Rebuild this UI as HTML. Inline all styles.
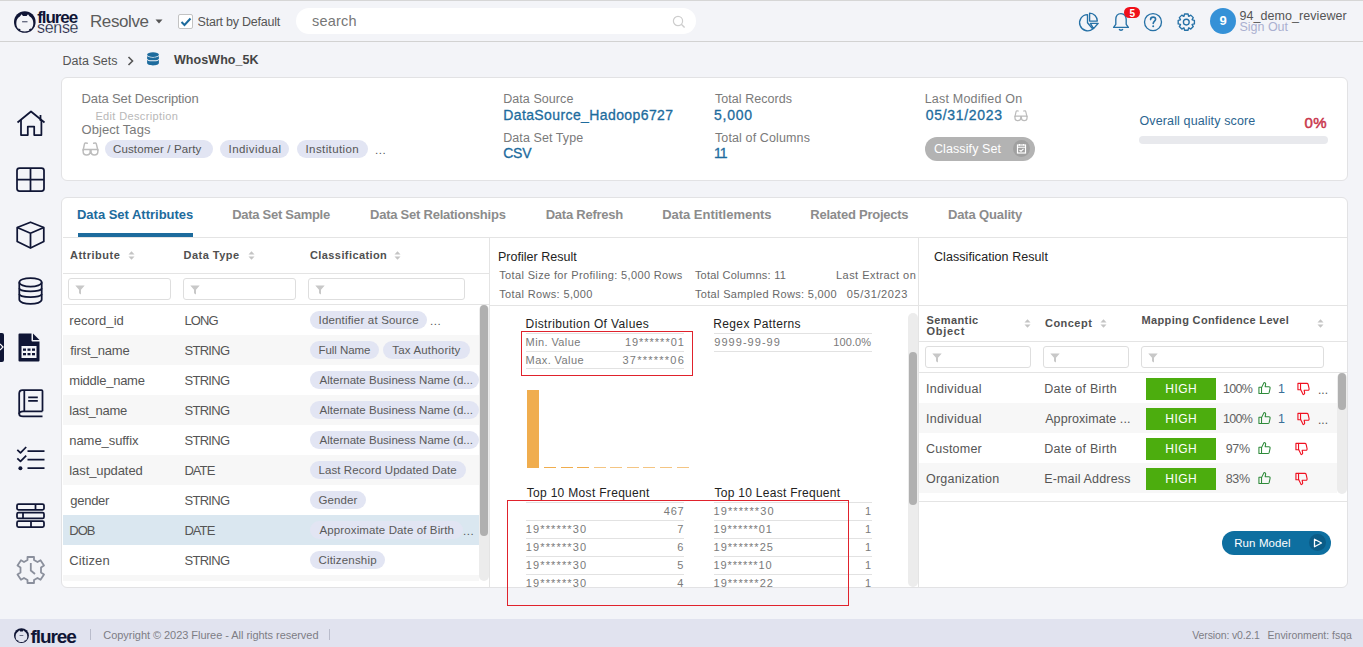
<!DOCTYPE html>
<html><head><meta charset="utf-8">
<style>
*{box-sizing:border-box;margin:0;padding:0}
html,body{width:1363px;height:647px;overflow:hidden;background:#f3f4f8;font-family:"Liberation Sans",sans-serif}
.s{position:absolute}
.t{position:absolute;white-space:pre;line-height:1}
svg{position:absolute;overflow:visible}
</style></head>
<body>
<div class="s" style="left:0px;top:0px;width:1363px;height:1px;background:#d6d6d6"></div>
<div class="s" style="left:0px;top:41px;width:1363px;height:1px;background:#d2d2d2"></div>
<svg style="left:14px;top:11.2px" width="22.0" height="22.0" viewBox="0 0 22 22">
<circle cx="10.8" cy="11" r="10.8" fill="#0f1535"/>
<path d="M2.3 12.2 C2.3 8.8 3.8 6.6 5.9 5.5 L7.6 3.3 L9 5.1 C10 4.9 11.6 4.9 12.6 5.1 L14 3.3 L15.7 5.5 C17.8 6.6 19.3 8.8 19.3 12.2 C19.3 17.6 15.6 20.4 10.8 20.4 C6 20.4 2.3 17.6 2.3 12.2 Z" fill="#f3f4f8"/>
<path d="M4.3 17.3 L6.7 18.6 L5.3 20.3 Z M17.3 17.3 L14.9 18.6 L16.3 20.3 Z" fill="#0f1535"/>
<rect x="8.1" y="10.2" width="5.4" height="1.1" fill="#0f1535" opacity="0.75"/>
</svg>
<svg style="left:155px;top:19px" width="8" height="5"><path d="M0.5 0.5 L7.5 0.5 L4 4.5 Z" fill="#555"/></svg>
<div class="s" style="left:178px;top:14px;width:15px;height:15px;border:1px solid #c3c3c3;border-radius:2px;background:#fff"></div>
<svg style="left:180px;top:17px" width="12" height="10"><path d="M1.5 5 L4.5 8 L10.5 1.5" stroke="#1d6b9d" stroke-width="2" fill="none"/></svg>
<div class="s" style="left:296px;top:8px;width:400px;height:26px;border-radius:13px;background:#fff"></div>
<svg style="left:672px;top:14.5px" width="14" height="14"><circle cx="6" cy="6" r="4.6" stroke="#cdcdcd" stroke-width="1.2" fill="none"/><path d="M9.3 9.3 L12.6 12.6" stroke="#cdcdcd" stroke-width="1.4"/></svg>
<svg style="left:1074px;top:4px" width="130" height="34" viewBox="0 0 130 34">
<path d="M13.5 10.6 A8.1 8.1 0 1 0 18.8 25 L13.5 18.7 Z" stroke="#2671a6" stroke-width="1.35" fill="none" stroke-linejoin="round"/>
<path d="M15.6 9.2 L15.6 17.1 L23.3 17.1 A7.9 7.9 0 0 0 15.6 9.2 Z" stroke="#2671a6" stroke-width="1.35" fill="none" stroke-linejoin="round"/>
<path d="M16.4 19.3 L24.2 19.3 L19.6 24.6 Z" stroke="#2671a6" stroke-width="1.35" fill="none" stroke-linejoin="round"/>
<path d="M47 9.6 C43.5 9.6 41.8 12.3 41.8 15.6 L41.8 20.3 L39.6 23.4 L54.4 23.4 L52.2 20.3 L52.2 15.6 C52.2 12.3 50.5 9.6 47 9.6 Z" stroke="#2671a6" stroke-width="1.35" fill="none" stroke-linejoin="round"/>
<path d="M45.2 25 C45.6 26.6 48.4 26.6 48.8 25" stroke="#2671a6" stroke-width="1.35" fill="none" stroke-linejoin="round"/>
<circle cx="79" cy="18.1" r="8.5" stroke="#2671a6" stroke-width="1.35" fill="none" stroke-linejoin="round"/>
<path d="M76.6 15.6 C76.6 13.9 77.7 13.1 79.1 13.1 C80.6 13.1 81.6 14 81.6 15.3 C81.6 17 79.2 17.3 79.2 19.5" stroke="#2671a6" stroke-width="1.6" fill="none" stroke-linecap="round"/>
<circle cx="79.2" cy="22.3" r="1" fill="#2671a6"/>
<path d="M110.00 12.23 L110.52 9.99 L114.08 9.99 L114.60 12.23 L114.82 12.33 L116.77 11.11 L119.29 13.63 L118.07 15.58 L118.17 15.80 L120.41 16.32 L120.41 19.88 L118.17 20.40 L118.07 20.62 L119.29 22.57 L116.77 25.09 L114.82 23.87 L114.60 23.97 L114.08 26.21 L110.52 26.21 L110.00 23.97 L109.78 23.87 L107.83 25.09 L105.31 22.57 L106.53 20.62 L106.43 20.40 L104.19 19.88 L104.19 16.32 L106.43 15.80 L106.53 15.58 L105.31 13.63 L107.83 11.11 L109.78 12.33 Z" stroke="#2671a6" stroke-width="1.35" fill="none" stroke-linejoin="round"/>
<circle cx="112.3" cy="18.1" r="2.9" stroke="#2671a6" stroke-width="1.35" fill="none" stroke-linejoin="round"/>
</svg>
<div class="s" style="left:1124px;top:7px;width:16px;height:11px;border-radius:6px;background:#f0101a"></div>
<div class="s" style="left:1210px;top:8px;width:26px;height:26px;border-radius:13px;background:#3591d7"></div>
<svg style="left:127px;top:56px" width="8" height="10"><path d="M1.5 1 L5.5 5 L1.5 9" stroke="#555" stroke-width="1.6" fill="none"/></svg>
<svg style="left:147px;top:52px" width="12" height="14" viewBox="0 0 12 14">
<ellipse cx="6" cy="2.6" rx="5.9" ry="2.4" fill="#1d6b9d"/>
<path d="M0.1 3.6 C0.1 6.4 11.9 6.4 11.9 3.6 L11.9 6.4 C11.9 9 0.1 9 0.1 6.4 Z" fill="#1d6b9d"/>
<path d="M0.1 7.4 C0.1 10 11.9 10 11.9 7.4 L11.9 11 C11.9 14.2 0.1 14.2 0.1 11 Z" fill="#1d6b9d"/>
</svg>
<svg style="left:16px;top:110px" width="30" height="27" viewBox="0 0 30 27">
<path d="M1.5 12.5 L15 1.5 L28.5 12.5" stroke="#0f1535" stroke-width="1.75" fill="none" stroke-linejoin="round"/>
<path d="M24.5 5 L24.5 11" stroke="#0f1535" stroke-width="1.75" fill="none" stroke-linejoin="round"/>
<path d="M5 10 L5 25 L11.8 25 L11.8 16.5 L18.2 16.5 L18.2 25 L25.4 25 L25.4 10" stroke="#0f1535" stroke-width="1.75" fill="none" stroke-linejoin="round"/>
</svg>
<svg style="left:16px;top:167px" width="29" height="25" viewBox="0 0 29 25">
<rect x="1" y="1" width="27" height="23" rx="2.5" stroke="#0f1535" stroke-width="1.75" fill="none" stroke-linejoin="round"/>
<path d="M14.5 1 L14.5 24 M1 12.5 L28 12.5" stroke="#0f1535" stroke-width="1.75" fill="none" stroke-linejoin="round"/>
</svg>
<svg style="left:16px;top:221px" width="29" height="28" viewBox="0 0 29 28">
<path d="M14.5 1.2 L27.8 6.5 L27.8 20.5 L14.5 27 L1.2 20.5 L1.2 6.5 Z" stroke="#0f1535" stroke-width="1.75" fill="none" stroke-linejoin="round"/>
<path d="M1.2 6.5 L14.5 12.2 L27.8 6.5 M14.5 12.2 L14.5 27" stroke="#0f1535" stroke-width="1.75" fill="none" stroke-linejoin="round"/>
</svg>
<svg style="left:18px;top:277px" width="25" height="28" viewBox="0 0 25 28">
<ellipse cx="12.5" cy="5.3" rx="11.2" ry="4.3" stroke="#0f1535" stroke-width="1.75" fill="none" stroke-linejoin="round"/>
<path d="M1.3 5.3 L1.3 22.6 C1.3 28.4 23.7 28.4 23.7 22.6 L23.7 5.3" stroke="#0f1535" stroke-width="1.75" fill="none" stroke-linejoin="round"/>
<path d="M1.3 11.2 C1.3 15.5 23.7 15.5 23.7 11.2 M1.3 17 C1.3 21.2 23.7 21.2 23.7 17" stroke="#0f1535" stroke-width="1.75" fill="none" stroke-linejoin="round"/>
</svg>
<div class="s" style="left:0px;top:333px;width:4px;height:29px;background:#0f1535;border-radius:0 2px 2px 0"></div>
<svg style="left:0px;top:342px" width="4" height="10"><path d="M0 2 L3 5 L0 8" stroke="#fff" stroke-width="1.2" fill="none"/></svg>
<svg style="left:18px;top:333px" width="23" height="29" viewBox="0 0 23 29">
<path d="M0.5 1.5 Q0.5 0.5 1.5 0.5 L13.5 0.5 L13.5 7.5 Q13.5 8.5 14.5 8.5 L21.5 8.5 L21.5 27.5 Q21.5 28.5 20.5 28.5 L1.5 28.5 Q0.5 28.5 0.5 27.5 Z" fill="#0f1535"/>
<path d="M15 0.5 L21.5 7 L15 7 Z" fill="#0f1535"/>
<rect x="3.5" y="13" width="15" height="12" fill="#f3f4f8"/>
<rect x="5" y="15.5" width="3" height="2.3" fill="#0f1535"/><rect x="9.5" y="15.5" width="3" height="2.3" fill="#0f1535"/><rect x="14" y="15.5" width="3" height="2.3" fill="#0f1535"/>
<rect x="5" y="20" width="3" height="2.3" fill="#0f1535"/><rect x="9.5" y="20" width="3" height="2.3" fill="#0f1535"/><rect x="14" y="20" width="3" height="2.3" fill="#0f1535"/>
</svg>
<svg style="left:18px;top:389px" width="26" height="29" viewBox="0 0 26 29">
<path d="M24.5 22.3 L5 22.3 C2.8 22.3 1.2 23.5 1.2 24.9 C1.2 26.3 2.8 27.3 5 27.3 L24.5 27.3" stroke="#0f1535" stroke-width="1.75" fill="none" stroke-linejoin="round"/>
<path d="M1.2 25 L1.2 4.5 C1.2 2.5 2.5 1 4.5 1 L23.5 1 Q24.5 1 24.5 2 L24.5 22.3" stroke="#0f1535" stroke-width="1.75" fill="none" stroke-linejoin="round"/>
<path d="M6.3 1 L6.3 22.3" stroke="#0f1535" stroke-width="1.75" fill="none" stroke-linejoin="round"/>
<path d="M10.2 8.3 L19.8 8.3 M10.2 11.8 L19.8 11.8" stroke="#0f1535" stroke-width="1.75" fill="none" stroke-linejoin="round"/>
</svg>
<svg style="left:16px;top:446px" width="30" height="26" viewBox="0 0 30 26">
<path d="M1.3 3.8 L4.5 6.8 L10.2 1 M1.3 12.3 L4.5 15.3 L10.2 9.6" stroke="#0f1535" stroke-width="1.75" fill="none" stroke-linejoin="round"/>
<path d="M11.5 5 L28.5 5 M11.5 13.7 L28.5 13.7 M11.5 22.2 L28.5 22.2" stroke="#0f1535" stroke-width="1.75" fill="none" stroke-linejoin="round"/>
<circle cx="4.4" cy="22.2" r="2" fill="#0f1535"/>
</svg>
<svg style="left:16px;top:503px" width="29" height="25" viewBox="0 0 29 25">
<rect x="1" y="1" width="27" height="5.8" rx="1.5" stroke="#0f1535" stroke-width="1.75" fill="none" stroke-linejoin="round"/>
<rect x="1" y="9.6" width="27" height="5.8" rx="1.5" stroke="#0f1535" stroke-width="1.75" fill="none" stroke-linejoin="round"/>
<rect x="1" y="18.2" width="27" height="5.8" rx="1.5" stroke="#0f1535" stroke-width="1.75" fill="none" stroke-linejoin="round"/>
<path d="M19.5 1 L19.5 6.8 M7 9.6 L7 15.4 M15 18.2 L15 24" stroke="#0f1535" stroke-width="1.75" fill="none" stroke-linejoin="round"/>
</svg>
<svg style="left:16px;top:555px" width="30" height="30" viewBox="0 0 30 30">
<path d="M11.5 2 L18 2 L18 5 L21.5 7 L24.5 5.3 L28 10.5 L25 12.5 L25 17.5 L28 19.5 L24.5 24.7 L21.5 23 L18 25 L18 28 L11.5 28 L11.5 25 L8 23 L5 24.7 L1.5 19.5 L4.5 17.5 L4.5 12.5 L1.5 10.5 L5 5.3 L8 7 L11.5 5 Z" stroke="#8a8f9c" stroke-width="1.8" fill="none" stroke-linejoin="round"/>
<path d="M14.8 8 L14.8 15.5 L19 19" stroke="#8a8f9c" stroke-width="1.8" fill="none"/>
</svg>
<div class="s" style="left:0px;top:619px;width:1363px;height:28px;background:#e1e3ef"></div>
<svg style="left:13.9px;top:628.3px" width="15.18" height="15.18" viewBox="0 0 22 22">
<circle cx="10.8" cy="11" r="10.8" fill="#0f1535"/>
<path d="M2.3 12.2 C2.3 8.8 3.8 6.6 5.9 5.5 L7.6 3.3 L9 5.1 C10 4.9 11.6 4.9 12.6 5.1 L14 3.3 L15.7 5.5 C17.8 6.6 19.3 8.8 19.3 12.2 C19.3 17.6 15.6 20.4 10.8 20.4 C6 20.4 2.3 17.6 2.3 12.2 Z" fill="#e1e3ef"/>
<path d="M4.3 17.3 L6.7 18.6 L5.3 20.3 Z M17.3 17.3 L14.9 18.6 L16.3 20.3 Z" fill="#0f1535"/>
<rect x="8.1" y="10.2" width="5.4" height="1.1" fill="#0f1535" opacity="0.75"/>
</svg>
<div class="s" style="left:90px;top:629px;width:1px;height:11px;background:#b9bccb"></div>
<div class="s" style="left:329px;top:629px;width:1px;height:11px;background:#b9bccb"></div>
<div class="s" style="left:61px;top:77px;width:1287px;height:104px;background:#fff;border:1px solid #e2e2e4;border-radius:6px"></div>
<svg style="left:81.5px;top:142px" width="17" height="14" viewBox="0 0 16.3 13.6"><g stroke="#bcbcbc" stroke-width="1.4" fill="none" stroke-linejoin="round" stroke-linecap="round">
<path d="M1 7.3 L15.3 7.3 M1 7.3 L1 9.5 C1 11.8 2.3 12.6 4.4 12.6 C6.5 12.6 7.8 11.8 7.8 9.5 L7.8 7.3 M8.7 7.3 L8.7 9.5 C8.7 11.8 9.8 12.6 11.9 12.6 C14 12.6 15.3 11.8 15.3 9.5 L15.3 7.3"/>
<path d="M1 8 L2.3 1.8 C2.5 0.9 3.5 0.8 5 1.2 M15.3 8 L13.8 1.8 C13.6 0.9 12.6 0.8 11.2 1.2"/></g></svg>
<div class="s" style="left:105px;top:140px;width:108px;height:18px;background:#e2e5f3;border-radius:9px"></div>
<div class="s" style="left:220px;top:140px;width:69px;height:18px;background:#e2e5f3;border-radius:9px"></div>
<div class="s" style="left:297px;top:140px;width:71px;height:18px;background:#e2e5f3;border-radius:9px"></div>
<svg style="left:1013.5px;top:110px" width="14" height="11.5" viewBox="0 0 16.3 13.6"><g stroke="#bcbcbc" stroke-width="1.4" fill="none" stroke-linejoin="round" stroke-linecap="round">
<path d="M1 7.3 L15.3 7.3 M1 7.3 L1 9.5 C1 11.8 2.3 12.6 4.4 12.6 C6.5 12.6 7.8 11.8 7.8 9.5 L7.8 7.3 M8.7 7.3 L8.7 9.5 C8.7 11.8 9.8 12.6 11.9 12.6 C14 12.6 15.3 11.8 15.3 9.5 L15.3 7.3"/>
<path d="M1 8 L2.3 1.8 C2.5 0.9 3.5 0.8 5 1.2 M15.3 8 L13.8 1.8 C13.6 0.9 12.6 0.8 11.2 1.2"/></g></svg>
<div class="s" style="left:925px;top:137px;width:110px;height:24px;background:#b3b3b3;border-radius:12px"></div>
<div class="s" style="left:1013px;top:140px;width:17px;height:17px;background:#a0a0a0;border-radius:9px"></div>
<svg style="left:1016px;top:142.7px" width="11" height="11" viewBox="0 0 11 11"><rect x="1.5" y="2" width="8" height="8" stroke="#fff" stroke-width="1.2" fill="none"/><path d="M1.5 4.3 L9.5 4.3 M3.5 1 L3.5 2.5 M7.5 1 L7.5 2.5 M3.5 7 L5 8.2 L7.5 5.8" stroke="#fff" stroke-width="1.1" fill="none"/></svg>
<div class="s" style="left:1139px;top:136px;width:189px;height:8px;background:#e8e9ed;border-radius:4px"></div>
<div class="s" style="left:61px;top:197px;width:1287px;height:391px;background:#fff;border:1px solid #e2e2e4;border-radius:6px"></div>
<div class="s" style="left:78px;top:233px;width:115px;height:4px;background:#1d6b9d"></div>
<div class="s" style="left:63px;top:237px;width:1284px;height:1px;background:#e4e4e4"></div>
<div class="s" style="left:489px;top:238px;width:1px;height:350px;background:#e4e4e4"></div>
<div class="s" style="left:918px;top:238px;width:1px;height:350px;background:#e4e4e4"></div>
<svg style="left:128px;top:251px" width="7" height="9" viewBox="0 0 7 9"><path d="M0.5 3.5 L3.5 0.3 L6.5 3.5 Z M0.5 5.5 L3.5 8.7 L6.5 5.5 Z" fill="#c4c4c4"/></svg>
<svg style="left:248px;top:251px" width="7" height="9" viewBox="0 0 7 9"><path d="M0.5 3.5 L3.5 0.3 L6.5 3.5 Z M0.5 5.5 L3.5 8.7 L6.5 5.5 Z" fill="#c4c4c4"/></svg>
<svg style="left:394px;top:251px" width="7" height="9" viewBox="0 0 7 9"><path d="M0.5 3.5 L3.5 0.3 L6.5 3.5 Z M0.5 5.5 L3.5 8.7 L6.5 5.5 Z" fill="#c4c4c4"/></svg>
<div class="s" style="left:63px;top:273px;width:426px;height:1px;background:#e4e4e4"></div>
<div class="s" style="left:68px;top:278px;width:103px;height:22px;border:1px solid #dedede;border-radius:3px;background:#fff"></div>
<svg style="left:75px;top:285px" width="10" height="10" viewBox="0 0 10 10"><path d="M0.3 0.5 L9.7 0.5 L6 4.8 L6 9.5 L4 8.2 L4 4.8 Z" fill="#c8c8c8"/></svg>
<div class="s" style="left:183px;top:278px;width:113px;height:22px;border:1px solid #dedede;border-radius:3px;background:#fff"></div>
<svg style="left:190px;top:285px" width="10" height="10" viewBox="0 0 10 10"><path d="M0.3 0.5 L9.7 0.5 L6 4.8 L6 9.5 L4 8.2 L4 4.8 Z" fill="#c8c8c8"/></svg>
<div class="s" style="left:308px;top:278px;width:157px;height:22px;border:1px solid #dedede;border-radius:3px;background:#fff"></div>
<svg style="left:315px;top:285px" width="10" height="10" viewBox="0 0 10 10"><path d="M0.3 0.5 L9.7 0.5 L6 4.8 L6 9.5 L4 8.2 L4 4.8 Z" fill="#c8c8c8"/></svg>
<div class="s" style="left:63px;top:304px;width:426px;height:1px;background:#e4e4e4"></div>
<div class="s" style="left:63px;top:305px;width:416px;height:30px;background:#fff"></div>
<div class="s" style="left:310px;top:311px;width:117px;height:18px;background:#e2e5f3;border-radius:9px"></div>
<div class="s" style="left:63px;top:335px;width:416px;height:30px;background:#f7f7f7"></div>
<div class="s" style="left:310px;top:341px;width:69px;height:18px;background:#e2e5f3;border-radius:9px"></div>
<div class="s" style="left:383px;top:341px;width:87px;height:18px;background:#e2e5f3;border-radius:9px"></div>
<div class="s" style="left:63px;top:365px;width:416px;height:30px;background:#fff"></div>
<div class="s" style="left:310px;top:371px;width:169px;height:18px;background:#e2e5f3;border-radius:9px"></div>
<div class="s" style="left:63px;top:395px;width:416px;height:30px;background:#f7f7f7"></div>
<div class="s" style="left:310px;top:401px;width:169px;height:18px;background:#e2e5f3;border-radius:9px"></div>
<div class="s" style="left:63px;top:425px;width:416px;height:30px;background:#fff"></div>
<div class="s" style="left:310px;top:431px;width:169px;height:18px;background:#e2e5f3;border-radius:9px"></div>
<div class="s" style="left:63px;top:455px;width:416px;height:30px;background:#f7f7f7"></div>
<div class="s" style="left:310px;top:461px;width:156px;height:18px;background:#e2e5f3;border-radius:9px"></div>
<div class="s" style="left:63px;top:485px;width:416px;height:30px;background:#fff"></div>
<div class="s" style="left:310px;top:491px;width:56px;height:18px;background:#e2e5f3;border-radius:9px"></div>
<div class="s" style="left:63px;top:515px;width:416px;height:30px;background:#dae7f0"></div>
<div class="s" style="left:310px;top:521px;width:153px;height:18px;background:#e2e5f3;border-radius:9px"></div>
<div class="s" style="left:63px;top:545px;width:416px;height:30px;background:#fff"></div>
<div class="s" style="left:310px;top:551px;width:74.5px;height:18px;background:#e2e5f3;border-radius:9px"></div>
<div class="s" style="left:63px;top:575px;width:416px;height:6px;background:#f7f7f7"></div>
<div class="s" style="left:479px;top:305px;width:10px;height:276px;background:#ececec;border-radius:5px"></div>
<div class="s" style="left:480px;top:305px;width:8px;height:231px;background:#b0b0b0;border-radius:4px"></div>
<div class="s" style="left:490px;top:305px;width:428px;height:1px;background:#e4e4e4"></div>
<div class="s" style="left:526px;top:333px;width:158px;height:1px;background:#e2e2e2"></div>
<div class="s" style="left:526px;top:351px;width:158px;height:1px;background:#e2e2e2"></div>
<div class="s" style="left:526px;top:368px;width:158px;height:1px;background:#e2e2e2"></div>
<div class="s" style="left:714px;top:333px;width:158px;height:1px;background:#e2e2e2"></div>
<div class="s" style="left:714px;top:351px;width:158px;height:1px;background:#e2e2e2"></div>
<div class="s" style="left:521px;top:331px;width:172px;height:45px;border:1.3px solid #e0222c"></div>
<div class="s" style="left:527px;top:390px;width:12px;height:78px;background:#f0ad4e"></div>
<div class="s" style="left:544px;top:466.5px;width:12px;height:1.6px;background:#f0ad4e;opacity:1.0"></div>
<div class="s" style="left:560.5px;top:466.5px;width:12px;height:1.6px;background:#f0ad4e;opacity:1.0"></div>
<div class="s" style="left:577px;top:466.5px;width:12px;height:1.6px;background:#f0ad4e;opacity:1.0"></div>
<div class="s" style="left:593.6px;top:466.5px;width:12px;height:1.6px;background:#f0ad4e;opacity:0.7"></div>
<div class="s" style="left:610px;top:466.5px;width:12px;height:1.6px;background:#f0ad4e;opacity:0.7"></div>
<div class="s" style="left:626.8px;top:466.5px;width:12px;height:1.6px;background:#f0ad4e;opacity:0.7"></div>
<div class="s" style="left:643.2px;top:466.5px;width:12px;height:1.6px;background:#f0ad4e;opacity:0.7"></div>
<div class="s" style="left:660px;top:466.5px;width:12px;height:1.6px;background:#f0ad4e;opacity:0.7"></div>
<div class="s" style="left:676.6px;top:466.5px;width:12px;height:1.6px;background:#f0ad4e;opacity:0.7"></div>
<div class="s" style="left:526px;top:502px;width:158px;height:1px;background:#e2e2e2"></div>
<div class="s" style="left:714px;top:502px;width:158px;height:1px;background:#e2e2e2"></div>
<div class="s" style="left:526px;top:520px;width:158px;height:1px;background:#e2e2e2"></div>
<div class="s" style="left:714px;top:520px;width:158px;height:1px;background:#e2e2e2"></div>
<div class="s" style="left:526px;top:538px;width:158px;height:1px;background:#e2e2e2"></div>
<div class="s" style="left:714px;top:538px;width:158px;height:1px;background:#e2e2e2"></div>
<div class="s" style="left:526px;top:556px;width:158px;height:1px;background:#e2e2e2"></div>
<div class="s" style="left:714px;top:556px;width:158px;height:1px;background:#e2e2e2"></div>
<div class="s" style="left:526px;top:574px;width:158px;height:1px;background:#e2e2e2"></div>
<div class="s" style="left:714px;top:574px;width:158px;height:1px;background:#e2e2e2"></div>
<div class="s" style="left:908px;top:313px;width:10px;height:274px;background:#ececec;border-radius:5px"></div>
<div class="s" style="left:909px;top:352px;width:8px;height:153px;background:#b0b0b0;border-radius:4px"></div>
<div class="s" style="left:919px;top:305px;width:428px;height:1px;background:#e4e4e4"></div>
<svg style="left:1024px;top:319px" width="7" height="9" viewBox="0 0 7 9"><path d="M0.5 3.5 L3.5 0.3 L6.5 3.5 Z M0.5 5.5 L3.5 8.7 L6.5 5.5 Z" fill="#c4c4c4"/></svg>
<svg style="left:1100px;top:319px" width="7" height="9" viewBox="0 0 7 9"><path d="M0.5 3.5 L3.5 0.3 L6.5 3.5 Z M0.5 5.5 L3.5 8.7 L6.5 5.5 Z" fill="#c4c4c4"/></svg>
<svg style="left:1317px;top:319px" width="7" height="9" viewBox="0 0 7 9"><path d="M0.5 3.5 L3.5 0.3 L6.5 3.5 Z M0.5 5.5 L3.5 8.7 L6.5 5.5 Z" fill="#c4c4c4"/></svg>
<div class="s" style="left:919px;top:341px;width:428px;height:1px;background:#e4e4e4"></div>
<div class="s" style="left:925px;top:346px;width:106px;height:22px;border:1px solid #dedede;border-radius:3px;background:#fff"></div>
<svg style="left:932px;top:353px" width="10" height="10" viewBox="0 0 10 10"><path d="M0.3 0.5 L9.7 0.5 L6 4.8 L6 9.5 L4 8.2 L4 4.8 Z" fill="#c8c8c8"/></svg>
<div class="s" style="left:1043px;top:346px;width:86px;height:22px;border:1px solid #dedede;border-radius:3px;background:#fff"></div>
<svg style="left:1050px;top:353px" width="10" height="10" viewBox="0 0 10 10"><path d="M0.3 0.5 L9.7 0.5 L6 4.8 L6 9.5 L4 8.2 L4 4.8 Z" fill="#c8c8c8"/></svg>
<div class="s" style="left:1141px;top:346px;width:183px;height:22px;border:1px solid #dedede;border-radius:3px;background:#fff"></div>
<svg style="left:1148px;top:353px" width="10" height="10" viewBox="0 0 10 10"><path d="M0.3 0.5 L9.7 0.5 L6 4.8 L6 9.5 L4 8.2 L4 4.8 Z" fill="#c8c8c8"/></svg>
<div class="s" style="left:919px;top:372px;width:428px;height:1px;background:#e4e4e4"></div>
<div class="s" style="left:919px;top:373px;width:418px;height:30px;background:#fff"></div>
<div class="s" style="left:1146px;top:378px;width:70px;height:21.5px;background:#4cad0e"></div>
<svg style="left:1258.3px;top:381px" width="13" height="14" viewBox="0 0 14 14"><g stroke="#2e8b3a" stroke-width="1.15" fill="none" stroke-linejoin="round"><path d="M1 6.2 L3.8 6.2 L3.8 13 L1 13 Z"/><path d="M3.8 6.6 L6.6 1 C7.8 1 8.4 1.9 8.2 3 L7.7 5.6 L11.7 5.6 C12.7 5.6 13.2 6.4 13 7.3 L12 12 C11.8 12.7 11.3 13 10.6 13 L3.8 13"/></g></svg>
<svg style="left:1296.5px;top:382px" width="13" height="14" viewBox="0 0 14 14"><g stroke="#f01020" stroke-width="1.2" fill="none" stroke-linejoin="round"><path d="M1 1 L3.8 1 L3.8 7.8 L1 7.8 Z"/><path d="M3.8 7.4 L6.6 13 C7.8 13 8.4 12.1 8.2 11 L7.7 8.4 L11.7 8.4 C12.7 8.4 13.2 7.6 13 6.7 L12 2 C11.8 1.3 11.3 1 10.6 1 L3.8 1"/></g></svg>
<div class="s" style="left:919px;top:403px;width:418px;height:30px;background:#f7f7f7"></div>
<div class="s" style="left:1146px;top:408px;width:70px;height:21.5px;background:#4cad0e"></div>
<svg style="left:1258.3px;top:411px" width="13" height="14" viewBox="0 0 14 14"><g stroke="#2e8b3a" stroke-width="1.15" fill="none" stroke-linejoin="round"><path d="M1 6.2 L3.8 6.2 L3.8 13 L1 13 Z"/><path d="M3.8 6.6 L6.6 1 C7.8 1 8.4 1.9 8.2 3 L7.7 5.6 L11.7 5.6 C12.7 5.6 13.2 6.4 13 7.3 L12 12 C11.8 12.7 11.3 13 10.6 13 L3.8 13"/></g></svg>
<svg style="left:1296.5px;top:412px" width="13" height="14" viewBox="0 0 14 14"><g stroke="#f01020" stroke-width="1.2" fill="none" stroke-linejoin="round"><path d="M1 1 L3.8 1 L3.8 7.8 L1 7.8 Z"/><path d="M3.8 7.4 L6.6 13 C7.8 13 8.4 12.1 8.2 11 L7.7 8.4 L11.7 8.4 C12.7 8.4 13.2 7.6 13 6.7 L12 2 C11.8 1.3 11.3 1 10.6 1 L3.8 1"/></g></svg>
<div class="s" style="left:919px;top:433px;width:418px;height:30px;background:#fff"></div>
<div class="s" style="left:1146px;top:438px;width:70px;height:21.5px;background:#4cad0e"></div>
<svg style="left:1258.3px;top:441px" width="13" height="14" viewBox="0 0 14 14"><g stroke="#2e8b3a" stroke-width="1.15" fill="none" stroke-linejoin="round"><path d="M1 6.2 L3.8 6.2 L3.8 13 L1 13 Z"/><path d="M3.8 6.6 L6.6 1 C7.8 1 8.4 1.9 8.2 3 L7.7 5.6 L11.7 5.6 C12.7 5.6 13.2 6.4 13 7.3 L12 12 C11.8 12.7 11.3 13 10.6 13 L3.8 13"/></g></svg>
<svg style="left:1294.5px;top:442px" width="13" height="14" viewBox="0 0 14 14"><g stroke="#f01020" stroke-width="1.2" fill="none" stroke-linejoin="round"><path d="M1 1 L3.8 1 L3.8 7.8 L1 7.8 Z"/><path d="M3.8 7.4 L6.6 13 C7.8 13 8.4 12.1 8.2 11 L7.7 8.4 L11.7 8.4 C12.7 8.4 13.2 7.6 13 6.7 L12 2 C11.8 1.3 11.3 1 10.6 1 L3.8 1"/></g></svg>
<div class="s" style="left:919px;top:463px;width:418px;height:30px;background:#f7f7f7"></div>
<div class="s" style="left:1146px;top:468px;width:70px;height:21.5px;background:#4cad0e"></div>
<svg style="left:1258.3px;top:471px" width="13" height="14" viewBox="0 0 14 14"><g stroke="#2e8b3a" stroke-width="1.15" fill="none" stroke-linejoin="round"><path d="M1 6.2 L3.8 6.2 L3.8 13 L1 13 Z"/><path d="M3.8 6.6 L6.6 1 C7.8 1 8.4 1.9 8.2 3 L7.7 5.6 L11.7 5.6 C12.7 5.6 13.2 6.4 13 7.3 L12 12 C11.8 12.7 11.3 13 10.6 13 L3.8 13"/></g></svg>
<svg style="left:1294.5px;top:472px" width="13" height="14" viewBox="0 0 14 14"><g stroke="#f01020" stroke-width="1.2" fill="none" stroke-linejoin="round"><path d="M1 1 L3.8 1 L3.8 7.8 L1 7.8 Z"/><path d="M3.8 7.4 L6.6 13 C7.8 13 8.4 12.1 8.2 11 L7.7 8.4 L11.7 8.4 C12.7 8.4 13.2 7.6 13 6.7 L12 2 C11.8 1.3 11.3 1 10.6 1 L3.8 1"/></g></svg>
<div class="s" style="left:1337px;top:373px;width:10px;height:121px;background:#ececec;border-radius:5px"></div>
<div class="s" style="left:1338px;top:373px;width:8px;height:37px;background:#b0b0b0;border-radius:4px"></div>
<div class="s" style="left:919px;top:501px;width:428px;height:1px;background:#e4e4e4"></div>
<div class="s" style="left:1222px;top:531px;width:109px;height:24px;background:#0e6fa0;border-radius:12px"></div>
<div class="s" style="left:1309px;top:534px;width:17px;height:17px;background:#0b5c87;border-radius:9px"></div>
<svg style="left:1313px;top:538px" width="10" height="10" viewBox="0 0 10 10"><path d="M1.5 1.2 L8.5 5 L1.5 8.8 Z" stroke="#fff" stroke-width="1.3" fill="none" stroke-linejoin="round"/></svg>
<div class="t" style="left:37.30px;top:9px;font-size:17px;color:#0f1535;font-weight:bold;letter-spacing:-1.100px;">fluree</div>
<div class="t" style="left:37.00px;top:20px;font-size:16px;color:#0f1535;font-weight:normal;letter-spacing:-0.300px;-webkit-text-stroke:0.25px #f3f4f8">sense</div>
<div class="t" style="left:90.00px;top:13px;font-size:17px;color:#5c5c5c;font-weight:normal;letter-spacing:-0.417px;">Resolve</div>
<div class="t" style="left:197.60px;top:16px;font-size:12.5px;color:#555;font-weight:normal;letter-spacing:-0.240px;">Start by Default</div>
<div class="t" style="left:312.00px;top:14px;font-size:14.5px;color:#777;font-weight:normal;letter-spacing:0.200px;">search</div>
<div class="t" style="left:1129.50px;top:9px;font-size:10px;color:#fff;font-weight:bold;letter-spacing:0.000px;">5</div>
<div class="t" style="left:1219.50px;top:14px;font-size:13px;color:#fff;font-weight:bold;letter-spacing:0.000px;">9</div>
<div class="t" style="left:1239.40px;top:10px;font-size:12.5px;color:#555;font-weight:normal;letter-spacing:0.067px;">94_demo_reviewer</div>
<div class="t" style="left:1239.40px;top:21px;font-size:12.5px;color:#aab0d0;font-weight:normal;letter-spacing:0.000px;">Sign Out</div>
<div class="t" style="left:62.50px;top:55px;font-size:12.5px;color:#555;font-weight:normal;letter-spacing:0.000px;">Data Sets</div>
<div class="t" style="left:174.00px;top:54px;font-size:12.5px;color:#444;font-weight:bold;letter-spacing:0.067px;">WhosWho_5K</div>
<div class="t" style="left:30.50px;top:627px;font-size:19px;color:#0f1535;font-weight:bold;letter-spacing:-1.100px;">fluree</div>
<div class="t" style="left:103.30px;top:630px;font-size:11px;color:#7d7d85;font-weight:normal;letter-spacing:-0.045px;">Copyright © 2023 Fluree - All rights reserved</div>
<div class="t" style="left:1192.30px;top:630px;font-size:10.5px;color:#7d7d85;font-weight:normal;letter-spacing:-0.129px;">Version: v0.2.1</div>
<div class="t" style="left:1267.60px;top:630px;font-size:10.5px;color:#7d7d85;font-weight:normal;letter-spacing:-0.025px;">Environment: fsqa</div>
<div class="t" style="left:81.50px;top:92px;font-size:13px;color:#7a7a7a;font-weight:normal;letter-spacing:-0.105px;">Data Set Description</div>
<div class="t" style="left:95.40px;top:111px;font-size:11px;color:#b8b8b8;font-weight:normal;letter-spacing:0.360px;">Edit Description</div>
<div class="t" style="left:81.50px;top:123px;font-size:13px;color:#7a7a7a;font-weight:normal;letter-spacing:0.050px;">Object Tags</div>
<div class="t" style="left:113.00px;top:144px;font-size:11.5px;color:#555;font-weight:normal;letter-spacing:0.133px;">Customer / Party</div>
<div class="t" style="left:228.50px;top:144px;font-size:11.5px;color:#555;font-weight:normal;letter-spacing:0.444px;">Individual</div>
<div class="t" style="left:305.50px;top:144px;font-size:11.5px;color:#555;font-weight:normal;letter-spacing:0.400px;">Institution</div>
<div class="t" style="left:375.00px;top:145px;font-size:11.5px;color:#555;font-weight:normal;letter-spacing:0.500px;">...</div>
<div class="t" style="left:503.20px;top:93px;font-size:12.5px;color:#7a7a7a;font-weight:normal;letter-spacing:0.070px;">Data Source</div>
<div class="t" style="left:503.20px;top:108px;font-size:14px;color:#1d6b9d;font-weight:normal;letter-spacing:0.400px;-webkit-text-stroke:0.3px #1d6b9d">DataSource_Hadoop6727</div>
<div class="t" style="left:503.20px;top:132px;font-size:12.5px;color:#7a7a7a;font-weight:normal;letter-spacing:0.083px;">Data Set Type</div>
<div class="t" style="left:503.20px;top:146px;font-size:14px;color:#1d6b9d;font-weight:normal;letter-spacing:-0.200px;-webkit-text-stroke:0.3px #1d6b9d">CSV</div>
<div class="t" style="left:715.00px;top:93px;font-size:12.5px;color:#7a7a7a;font-weight:normal;letter-spacing:0.050px;">Total Records</div>
<div class="t" style="left:714.00px;top:108px;font-size:14px;color:#1d6b9d;font-weight:normal;letter-spacing:0.750px;-webkit-text-stroke:0.3px #1d6b9d">5,000</div>
<div class="t" style="left:715.00px;top:132px;font-size:12.5px;color:#7a7a7a;font-weight:normal;letter-spacing:0.120px;">Total of Columns</div>
<div class="t" style="left:714.00px;top:146px;font-size:14px;color:#1d6b9d;font-weight:normal;letter-spacing:-1.000px;-webkit-text-stroke:0.3px #1d6b9d">11</div>
<div class="t" style="left:924.70px;top:93px;font-size:12.5px;color:#7a7a7a;font-weight:normal;letter-spacing:0.200px;">Last Modified On</div>
<div class="t" style="left:925.70px;top:108px;font-size:14px;color:#1d6b9d;font-weight:normal;letter-spacing:0.700px;-webkit-text-stroke:0.3px #1d6b9d">05/31/2023</div>
<div class="t" style="left:934.00px;top:143px;font-size:12.5px;color:#fff;font-weight:normal;letter-spacing:0.091px;">Classify Set</div>
<div class="t" style="left:1139.50px;top:115px;font-size:12.5px;color:#2b6590;font-weight:normal;letter-spacing:0.125px;">Overall quality score</div>
<div class="t" style="left:1304.60px;top:115px;font-size:15px;color:#c9374d;font-weight:normal;letter-spacing:0.400px;-webkit-text-stroke:0.5px #c9374d">0%</div>
<div class="t" style="left:77.00px;top:208px;font-size:13px;color:#1d6b9d;font-weight:bold;letter-spacing:-0.017px;">Data Set Attributes</div>
<div class="t" style="left:232.20px;top:208px;font-size:13px;color:#8c8c8c;font-weight:bold;letter-spacing:-0.279px;">Data Set Sample</div>
<div class="t" style="left:370.00px;top:208px;font-size:13px;color:#8c8c8c;font-weight:bold;letter-spacing:-0.238px;">Data Set Relationships</div>
<div class="t" style="left:545.70px;top:208px;font-size:13px;color:#8c8c8c;font-weight:bold;letter-spacing:-0.245px;">Data Refresh</div>
<div class="t" style="left:662.20px;top:208px;font-size:13px;color:#8c8c8c;font-weight:bold;letter-spacing:-0.025px;">Data Entitlements</div>
<div class="t" style="left:810.30px;top:208px;font-size:13px;color:#8c8c8c;font-weight:bold;letter-spacing:-0.240px;">Related Projects</div>
<div class="t" style="left:948.00px;top:208px;font-size:13px;color:#8c8c8c;font-weight:bold;letter-spacing:-0.145px;">Data Quality</div>
<div class="t" style="left:70.00px;top:250px;font-size:11px;color:#505050;font-weight:bold;letter-spacing:0.500px;">Attribute</div>
<div class="t" style="left:183.60px;top:250px;font-size:11px;color:#505050;font-weight:bold;letter-spacing:0.463px;">Data Type</div>
<div class="t" style="left:310.00px;top:250px;font-size:11px;color:#505050;font-weight:bold;letter-spacing:0.408px;">Classification</div>
<div class="t" style="left:69.30px;top:314px;font-size:13px;color:#555;font-weight:normal;letter-spacing:0.037px;">record_id</div>
<div class="t" style="left:184.40px;top:314px;font-size:13px;color:#555;font-weight:normal;letter-spacing:-0.900px;">LONG</div>
<div class="t" style="left:318.50px;top:315px;font-size:11.5px;color:#5a5a5a;font-weight:normal;letter-spacing:0.184px;">Identifier at Source</div>
<div class="t" style="left:430.00px;top:316px;font-size:11.5px;color:#555;font-weight:normal;letter-spacing:0.500px;">...</div>
<div class="t" style="left:70.30px;top:344px;font-size:13px;color:#555;font-weight:normal;letter-spacing:-0.133px;">first_name</div>
<div class="t" style="left:184.40px;top:344px;font-size:13px;color:#555;font-weight:normal;letter-spacing:-0.680px;">STRING</div>
<div class="t" style="left:318.50px;top:345px;font-size:11.5px;color:#5a5a5a;font-weight:normal;letter-spacing:-0.050px;">Full Name</div>
<div class="t" style="left:392.20px;top:345px;font-size:11.5px;color:#5a5a5a;font-weight:normal;letter-spacing:0.192px;">Tax Authority</div>
<div class="t" style="left:69.30px;top:374px;font-size:13px;color:#555;font-weight:normal;letter-spacing:-0.240px;">middle_name</div>
<div class="t" style="left:184.40px;top:374px;font-size:13px;color:#555;font-weight:normal;letter-spacing:-0.680px;">STRING</div>
<div class="t" style="left:319.50px;top:375px;font-size:11.5px;color:#5a5a5a;font-weight:normal;letter-spacing:0.025px;">Alternate Business Name (d...</div>
<div class="t" style="left:69.30px;top:404px;font-size:13px;color:#555;font-weight:normal;letter-spacing:-0.250px;">last_name</div>
<div class="t" style="left:184.40px;top:404px;font-size:13px;color:#555;font-weight:normal;letter-spacing:-0.680px;">STRING</div>
<div class="t" style="left:319.50px;top:405px;font-size:11.5px;color:#5a5a5a;font-weight:normal;letter-spacing:0.025px;">Alternate Business Name (d...</div>
<div class="t" style="left:69.30px;top:434px;font-size:13px;color:#555;font-weight:normal;letter-spacing:-0.070px;">name_suffix</div>
<div class="t" style="left:184.40px;top:434px;font-size:13px;color:#555;font-weight:normal;letter-spacing:-0.680px;">STRING</div>
<div class="t" style="left:319.50px;top:435px;font-size:11.5px;color:#5a5a5a;font-weight:normal;letter-spacing:0.025px;">Alternate Business Name (d...</div>
<div class="t" style="left:69.30px;top:464px;font-size:13px;color:#555;font-weight:normal;letter-spacing:-0.091px;">last_updated</div>
<div class="t" style="left:184.40px;top:464px;font-size:13px;color:#555;font-weight:normal;letter-spacing:-0.933px;">DATE</div>
<div class="t" style="left:318.50px;top:465px;font-size:11.5px;color:#5a5a5a;font-weight:normal;letter-spacing:0.087px;">Last Record Updated Date</div>
<div class="t" style="left:70.30px;top:494px;font-size:13px;color:#555;font-weight:normal;letter-spacing:-0.280px;">gender</div>
<div class="t" style="left:184.40px;top:494px;font-size:13px;color:#555;font-weight:normal;letter-spacing:-0.680px;">STRING</div>
<div class="t" style="left:318.50px;top:495px;font-size:11.5px;color:#5a5a5a;font-weight:normal;letter-spacing:0.080px;">Gender</div>
<div class="t" style="left:69.30px;top:524px;font-size:13px;color:#555;font-weight:normal;letter-spacing:-1.000px;">DOB</div>
<div class="t" style="left:184.40px;top:524px;font-size:13px;color:#555;font-weight:normal;letter-spacing:-0.933px;">DATE</div>
<div class="t" style="left:319.50px;top:525px;font-size:11.5px;color:#5a5a5a;font-weight:normal;letter-spacing:0.117px;">Approximate Date of Birth</div>
<div class="t" style="left:463.00px;top:526px;font-size:11.5px;color:#555;font-weight:normal;letter-spacing:0.500px;">...</div>
<div class="t" style="left:69.30px;top:554px;font-size:13px;color:#555;font-weight:normal;letter-spacing:0.100px;">Citizen</div>
<div class="t" style="left:184.40px;top:554px;font-size:13px;color:#555;font-weight:normal;letter-spacing:-0.680px;">STRING</div>
<div class="t" style="left:318.50px;top:555px;font-size:11.5px;color:#5a5a5a;font-weight:normal;letter-spacing:0.180px;">Citizenship</div>
<div class="t" style="left:497.90px;top:251px;font-size:12.5px;color:#222;font-weight:normal;letter-spacing:0.021px;">Profiler Result</div>
<div class="t" style="left:499.20px;top:270px;font-size:11px;color:#686868;font-weight:normal;letter-spacing:0.360px;">Total Size for Profiling: 5,000 Rows</div>
<div class="t" style="left:499.20px;top:289px;font-size:11px;color:#686868;font-weight:normal;letter-spacing:0.362px;">Total Rows: 5,000</div>
<div class="t" style="left:694.90px;top:270px;font-size:11px;color:#686868;font-weight:normal;letter-spacing:0.231px;">Total Columns: 11</div>
<div class="t" style="left:836.00px;top:270px;font-size:11px;color:#686868;font-weight:normal;letter-spacing:0.457px;">Last Extract on</div>
<div class="t" style="left:694.90px;top:289px;font-size:11px;color:#686868;font-weight:normal;letter-spacing:0.325px;">Total Sampled Rows: 5,000</div>
<div class="t" style="left:846.70px;top:289px;font-size:11px;color:#686868;font-weight:normal;letter-spacing:0.633px;">05/31/2023</div>
<div class="t" style="left:525.60px;top:318px;font-size:12px;color:#222;font-weight:normal;letter-spacing:0.381px;">Distribution Of Values</div>
<div class="t" style="left:713.30px;top:318px;font-size:12px;color:#222;font-weight:normal;letter-spacing:0.354px;">Regex Patterns</div>
<div class="t" style="left:525.60px;top:337px;font-size:11px;color:#7a7a7a;font-weight:normal;letter-spacing:0.400px;">Min. Value</div>
<div class="t" style="left:624.90px;top:337px;font-size:11px;color:#7a7a7a;font-weight:normal;letter-spacing:0.978px;">19******01</div>
<div class="t" style="left:525.60px;top:355px;font-size:11px;color:#7a7a7a;font-weight:normal;letter-spacing:0.422px;">Max. Value</div>
<div class="t" style="left:622.50px;top:355px;font-size:11px;color:#7a7a7a;font-weight:normal;letter-spacing:1.244px;">37******06</div>
<div class="t" style="left:714.30px;top:337px;font-size:11px;color:#7a7a7a;font-weight:normal;letter-spacing:1.033px;">9999-99-99</div>
<div class="t" style="left:833.20px;top:337px;font-size:11px;color:#7a7a7a;font-weight:normal;letter-spacing:0.120px;">100.0%</div>
<div class="t" style="left:526.70px;top:487px;font-size:12px;color:#222;font-weight:normal;letter-spacing:0.316px;">Top 10 Most Frequent</div>
<div class="t" style="left:714.50px;top:487px;font-size:12px;color:#222;font-weight:normal;letter-spacing:0.275px;">Top 10 Least Frequent</div>
<div class="t" style="left:663.80px;top:506px;font-size:11px;color:#7a7a7a;font-weight:normal;letter-spacing:0.750px;">467</div>
<div class="t" style="left:713.50px;top:506px;font-size:11px;color:#7a7a7a;font-weight:normal;letter-spacing:1.100px;">19******30</div>
<div class="t" style="left:865.00px;top:506px;font-size:11px;color:#7a7a7a;font-weight:normal;letter-spacing:0.000px;">1</div>
<div class="t" style="left:525.70px;top:524px;font-size:11px;color:#7a7a7a;font-weight:normal;letter-spacing:1.144px;">19******30</div>
<div class="t" style="left:677.30px;top:524px;font-size:11px;color:#7a7a7a;font-weight:normal;letter-spacing:0.000px;">7</div>
<div class="t" style="left:713.50px;top:524px;font-size:11px;color:#7a7a7a;font-weight:normal;letter-spacing:0.922px;">19******01</div>
<div class="t" style="left:865.00px;top:524px;font-size:11px;color:#7a7a7a;font-weight:normal;letter-spacing:0.000px;">1</div>
<div class="t" style="left:525.70px;top:542px;font-size:11px;color:#7a7a7a;font-weight:normal;letter-spacing:1.144px;">19******30</div>
<div class="t" style="left:677.30px;top:542px;font-size:11px;color:#7a7a7a;font-weight:normal;letter-spacing:0.000px;">6</div>
<div class="t" style="left:713.50px;top:542px;font-size:11px;color:#7a7a7a;font-weight:normal;letter-spacing:1.033px;">19******25</div>
<div class="t" style="left:865.00px;top:542px;font-size:11px;color:#7a7a7a;font-weight:normal;letter-spacing:0.000px;">1</div>
<div class="t" style="left:525.70px;top:560px;font-size:11px;color:#7a7a7a;font-weight:normal;letter-spacing:1.144px;">19******30</div>
<div class="t" style="left:677.30px;top:560px;font-size:11px;color:#7a7a7a;font-weight:normal;letter-spacing:0.000px;">5</div>
<div class="t" style="left:713.50px;top:560px;font-size:11px;color:#7a7a7a;font-weight:normal;letter-spacing:0.878px;">19******10</div>
<div class="t" style="left:865.00px;top:560px;font-size:11px;color:#7a7a7a;font-weight:normal;letter-spacing:0.000px;">1</div>
<div class="t" style="left:525.70px;top:578px;font-size:11px;color:#7a7a7a;font-weight:normal;letter-spacing:1.144px;">19******30</div>
<div class="t" style="left:677.30px;top:578px;font-size:11px;color:#7a7a7a;font-weight:normal;letter-spacing:0.000px;">4</div>
<div class="t" style="left:713.50px;top:578px;font-size:11px;color:#7a7a7a;font-weight:normal;letter-spacing:1.033px;">19******22</div>
<div class="t" style="left:865.00px;top:578px;font-size:11px;color:#7a7a7a;font-weight:normal;letter-spacing:0.000px;">1</div>
<div class="t" style="left:934.00px;top:251px;font-size:12.5px;color:#222;font-weight:normal;letter-spacing:0.070px;">Classification Result</div>
<div class="t" style="left:926.60px;top:315px;font-size:11px;color:#505050;font-weight:bold;letter-spacing:0.386px;">Semantic</div>
<div class="t" style="left:926.60px;top:326px;font-size:11px;color:#505050;font-weight:bold;letter-spacing:0.700px;">Object</div>
<div class="t" style="left:1045.00px;top:318px;font-size:11px;color:#505050;font-weight:bold;letter-spacing:0.467px;">Concept</div>
<div class="t" style="left:1141.60px;top:315px;font-size:11px;color:#505050;font-weight:bold;letter-spacing:0.343px;">Mapping Confidence Level</div>
<div class="t" style="left:926.00px;top:383px;font-size:12.5px;color:#555;font-weight:normal;letter-spacing:0.300px;">Individual</div>
<div class="t" style="left:1044.20px;top:383px;font-size:12.5px;color:#555;font-weight:normal;letter-spacing:0.258px;">Date of Birth</div>
<div class="t" style="left:1165.20px;top:383px;font-size:12px;color:#fff;font-weight:normal;letter-spacing:0.533px;">HIGH</div>
<div class="t" style="left:1223.00px;top:383px;font-size:12.5px;color:#626262;font-weight:normal;letter-spacing:-0.667px;">100%</div>
<div class="t" style="left:1278.00px;top:383px;font-size:12.5px;color:#3a6f98;font-weight:normal;letter-spacing:0.000px;">1</div>
<div class="t" style="left:1318.00px;top:384px;font-size:12px;color:#555;font-weight:normal;letter-spacing:0.000px;">...</div>
<div class="t" style="left:926.00px;top:413px;font-size:12.5px;color:#555;font-weight:normal;letter-spacing:0.300px;">Individual</div>
<div class="t" style="left:1045.20px;top:413px;font-size:12.5px;color:#555;font-weight:normal;letter-spacing:0.086px;">Approximate ...</div>
<div class="t" style="left:1165.20px;top:413px;font-size:12px;color:#fff;font-weight:normal;letter-spacing:0.533px;">HIGH</div>
<div class="t" style="left:1223.00px;top:413px;font-size:12.5px;color:#626262;font-weight:normal;letter-spacing:-0.667px;">100%</div>
<div class="t" style="left:1278.00px;top:413px;font-size:12.5px;color:#3a6f98;font-weight:normal;letter-spacing:0.000px;">1</div>
<div class="t" style="left:1318.00px;top:414px;font-size:12px;color:#555;font-weight:normal;letter-spacing:0.000px;">...</div>
<div class="t" style="left:926.00px;top:443px;font-size:12.5px;color:#555;font-weight:normal;letter-spacing:0.229px;">Customer</div>
<div class="t" style="left:1044.20px;top:443px;font-size:12.5px;color:#555;font-weight:normal;letter-spacing:0.258px;">Date of Birth</div>
<div class="t" style="left:1165.20px;top:443px;font-size:12px;color:#fff;font-weight:normal;letter-spacing:0.533px;">HIGH</div>
<div class="t" style="left:1225.70px;top:443px;font-size:12.5px;color:#626262;font-weight:normal;letter-spacing:-0.350px;">97%</div>
<div class="t" style="left:926.00px;top:473px;font-size:12.5px;color:#555;font-weight:normal;letter-spacing:0.209px;">Organization</div>
<div class="t" style="left:1044.20px;top:473px;font-size:12.5px;color:#555;font-weight:normal;letter-spacing:0.169px;">E-mail Address</div>
<div class="t" style="left:1165.20px;top:473px;font-size:12px;color:#fff;font-weight:normal;letter-spacing:0.533px;">HIGH</div>
<div class="t" style="left:1225.70px;top:473px;font-size:12.5px;color:#626262;font-weight:normal;letter-spacing:-0.350px;">83%</div>
<div class="t" style="left:1234.20px;top:538px;font-size:11.5px;color:#fff;font-weight:normal;letter-spacing:0.100px;">Run Model</div>
<div class="s" style="left:490px;top:587px;width:428px;height:31px;background:#f3f4f8"></div>
<div class="s" style="left:489px;top:587px;width:430px;height:1px;background:#e2e2e4"></div>
<div class="s" style="left:507px;top:500px;width:342px;height:106px;border:1.3px solid #e0222c"></div>
</body></html>
